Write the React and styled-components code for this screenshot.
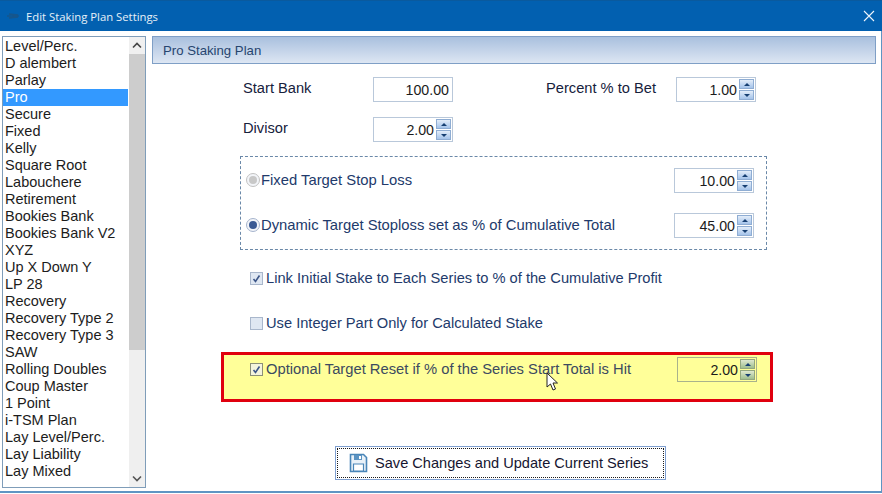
import React from 'react';
import styled, { createGlobalStyle } from 'styled-components';

const Global = createGlobalStyle`
  html, body { margin: 0; padding: 0; background: #fff; }
  body { font-family: "Liberation Sans", Arial, sans-serif; }
`;
const Win = styled.div`
  width: 882px; height: 494px; display: flex; flex-direction: column; overflow: hidden; background: #fff;
  box-sizing: border-box;
`;
const TitleBar = styled.div`
  height: 31px; flex: none; background: #0260b0; display: flex; align-items: center; padding: 0 7px 0 6px; color: #e6f0f8;
  font: 11.3px "Open Sans", "Liberation Sans", sans-serif; box-sizing: border-box; border-top: 1px solid #0a5a9e;
`;
const AppIcon = styled.svg` width: 15px; height: 10px; margin-right: 5px; flex: none; `;
const Title = styled.div` flex: 1; `;
const Body = styled.div`
  flex: none; height: 462px; display: flex; padding: 5px 5px 0 2px; box-sizing: border-box; gap: 6px;
  border-bottom: 2px solid #5f95c3; border-right: 1px solid #5f95c3;
`;
const ListBox = styled.div`
  width: 144px; height: 452px; flex: none; border: 1px solid #7f9db9; box-sizing: border-box; display: flex; background: #fff;
`;
const Items = styled.div` flex: 1; padding-top: 1px; overflow: hidden; `;
const Item = styled.div`
  height: 17px; line-height: 17px; font-size: 14.5px; padding-left: 2px; white-space: nowrap;
  color: ${p => (p.$sel ? '#fff' : '#1c1c1c')}; background: ${p => (p.$sel ? '#3399ff' : 'transparent')};
`;
const Scrollbar = styled.div`
  width: 16px; margin-left: 1px; flex: none; background: #efefef; display: flex; flex-direction: column;
`;
const ScrollBtn = styled.div` height: 17px; flex: none; display: flex; align-items: center; justify-content: center; background: #f0f0f0; `;
const Thumb = styled.div` height: 296px; flex: none; background: #cdcdcd; `;
const ScrollRest = styled.div` flex: 1; `;
const Panel = styled.div` flex: 1; display: flex; flex-direction: column; min-width: 0; `;
const Header = styled.div`
  height: 28px; flex: none; box-sizing: border-box; border: 1px solid #7f9fc6; background: linear-gradient(#a9c0de, #dde6f3);
  display: flex; align-items: center; padding-left: 10px; font: 13.2px "Liberation Sans", sans-serif; color: #26456f;
`;
const Form = styled.div` display: flex; flex-direction: column; padding: 13px 0 0 69px; flex: 1; `;
const Row = styled.div` display: flex; align-items: center; height: 25px; margin-top: ${p => p.$mt || 0}px; `;
const Label = styled.div`
  font-size: 14.67px; color: #16213c; width: ${p => p.$w}px; flex: none; padding-left: ${p => p.$pl}px; box-sizing: border-box; padding-bottom: 4px;
`;
const Group = styled.div`
  margin: 14px 0 0 19px; width: 527px; height: 94px; box-sizing: border-box; border: 1px dashed #6a88a8;
  padding: 11px 12px 0 5px; display: flex; flex-direction: column; gap: 20px;
`;
const OptRow = styled.div` display: flex; align-items: center; height: 25px; justify-content: space-between; `;
const OptLabel = styled.label`
  display: flex; align-items: center; gap: 1px; font-size: 14.8px; color: #223a6b; padding-bottom: 2px;
`;
const Radio = styled.span`
  width: 14px; height: 14px; border-radius: 50%; box-sizing: border-box; flex: none; display: flex; align-items: center; justify-content: center;
  border: 1px solid ${p => (p.$off ? '#c2c2c2' : '#a6b4cd')}; background: #f3f5f9;
  &::after { content: ''; width: 8px; height: 8px; border-radius: 50%; background: ${p => (p.$off ? '#c8c8c8' : '#3a5a94')}; }
`;
const CheckRow = styled.div`
  display: flex; align-items: center; margin: ${p => p.$mt}px 0 0 29px; height: 20px; gap: 3px; font-size: 14.67px; color: #223a6b;
`;
const Check = styled.span`
  width: 13px; height: 13px; flex: none; box-sizing: border-box; border: 1px solid ${p => (p.$hi ? '#8c9078' : '#a9b7cc')};
  background: ${p => (p.$hi ? '#f4f4dc' : '#dfe7f2')}; display: flex; align-items: center; justify-content: center; margin-top: 1px;
`;
const Highlight = styled.div`
  margin: 19px 0 0 0; width: 552px; height: 50px; box-sizing: border-box; border: 3px solid #e0000e; background: #ffff99;
  display: flex; align-items: flex-start; justify-content: space-between; padding: 2px 13px 0 26px; color: #3c4a60; font-size: 14.75px; position: relative;
`;
const HighText = styled.div` display: flex; align-items: center; gap: 3px; height: 25px; padding-bottom: 2px; box-sizing: border-box; `;
const Cursor = styled.svg` position: absolute; left: 322px; top: 17px; width: 13px; height: 20px; `;
const Footer = styled.div` display: flex; padding: 44px 0 0 114px; `;
const SaveButton = styled.button`
  width: 331px; height: 34px; box-sizing: border-box; border: 1px solid #7f9fd0; background: #fff; padding: 1px; display: block; font: inherit;
`;
const SaveInner = styled.span`
  display: flex; width: 100%; height: 100%; box-sizing: border-box; border: 1px dotted #1a1a1a; align-items: center; padding-left: 11px; gap: 7px;
  font: 14.6px "Liberation Sans", sans-serif; color: #151530;
`;
const Spin = styled.div`
  width: 80px; height: 25px; flex: none; box-sizing: border-box; border: 1px solid ${p => (p.$hi ? '#a9b28c' : '#b9c8da')};
  background: ${p => (p.$hi ? '#ffff99' : '#fff')}; display: flex; align-items: center; justify-content: flex-end; padding-right: 1px;
`;
const Value = styled.span` font-size: 14.2px; color: #1b1b1b; margin-right: 2px; padding-top: 1px; `;
const Btns = styled.div` width: 15px; height: 21px; display: flex; flex-direction: column; gap: 1px; flex: none; `;
const Btn = styled.div`
  flex: 1; display: flex; align-items: center; justify-content: center;
  background: ${p => (p.$hi ? 'linear-gradient(#dfe8cf,#9fbe8f)' : 'linear-gradient(#e3edf9,#a4c3ea)')}; border: 1px solid ${p => (p.$hi ? '#93a77f' : '#8fadd3')}; box-sizing: border-box;
`;
const Arrow = styled.span`
  width: 0; height: 0; border-left: 3px solid transparent; border-right: 3px solid transparent;
  ${p => (p.$down ? 'border-top: 3px solid #163f72;' : 'border-bottom: 3px solid #163f72;')}
`;

const SpinBox = ({ value, hi, plain }) => (
  <Spin $hi={hi}>
    <Value>{value}</Value>
    {!plain && (
      <Btns>
        <Btn $hi={hi}><Arrow /></Btn>
        <Btn $hi={hi}><Arrow $down /></Btn>
      </Btns>
    )}
  </Spin>
);
const Tick = () => (
  <svg width="9" height="9" viewBox="0 0 9 9"><path d="M1.5 5l2 2.5L7.5 1.5" fill="none" stroke="#3d5688" strokeWidth="1.6" /></svg>
);
const plans = ['Level/Perc.','D alembert','Parlay','Pro','Secure','Fixed','Kelly','Square Root','Labouchere','Retirement','Bookies Bank','Bookies Bank V2','XYZ','Up X Down Y','LP 28','Recovery','Recovery Type 2','Recovery Type 3','SAW','Rolling Doubles','Coup Master','1 Point','i-TSM Plan','Lay Level/Perc.','Lay Liability','Lay Mixed'];

export default function App() {
  return (
    <Win>
      <Global />
      <TitleBar>
        <AppIcon viewBox="0 0 15 10"><path d="M1 5h12M3 3l9 1M3 7l9-1" stroke="#16568c" strokeWidth="1.5" fill="none" /></AppIcon>
        <Title>Edit Staking Plan Settings</Title>
        <svg width="12" height="12" viewBox="0 0 12 12"><path d="M1 1l10 10M11 1L1 11" stroke="#eef5fb" strokeWidth="1.1" /></svg>
      </TitleBar>
      <Body>
        <ListBox>
          <Items>
            {plans.map(p => <Item key={p} $sel={p === 'Pro'}>{p}</Item>)}
          </Items>
          <Scrollbar>
            <ScrollBtn><svg width="10" height="7" viewBox="0 0 10 7"><path d="M1 5.5l4-4 4 4" fill="none" stroke="#444" strokeWidth="1.6" /></svg></ScrollBtn>
            <Thumb />
            <ScrollRest />
            <ScrollBtn><svg width="10" height="7" viewBox="0 0 10 7"><path d="M1 1.5l4 4 4-4" fill="none" stroke="#555" strokeWidth="1.6" /></svg></ScrollBtn>
          </Scrollbar>
        </ListBox>
        <Panel>
          <Header>Pro Staking Plan</Header>
          <Form>
            <Row>
              <Label $w={152} $pl={22}>Start Bank</Label>
              <SpinBox value="100.00" plain />
              <Label $w={223} $pl={93}>Percent % to Bet</Label>
              <SpinBox value="1.00" />
            </Row>
            <Row $mt={15}>
              <Label $w={152} $pl={22}>Divisor</Label>
              <SpinBox value="2.00" />
            </Row>
            <Group>
              <OptRow>
                <OptLabel><Radio $off />Fixed Target Stop Loss</OptLabel>
                <SpinBox value="10.00" />
              </OptRow>
              <OptRow>
                <OptLabel><Radio />Dynamic Target Stoploss set as % of Cumulative Total</OptLabel>
                <SpinBox value="45.00" />
              </OptRow>
            </Group>
            <CheckRow $mt={18}><Check><Tick /></Check>Link Initial Stake to Each Series to % of the Cumulative Profit</CheckRow>
            <CheckRow $mt={25}><Check />Use Integer Part Only for Calculated Stake</CheckRow>
            <Highlight>
              <HighText><Check $hi><Tick /></Check>Optional Target Reset if % of the Series Start Total is Hit</HighText>
              <SpinBox value="2.00" hi />
              <Cursor viewBox="0 0 13 20">
                <path d="M1 1v14l3.5-3 2.5 6 2.5-1-2.5-6h4.5z" fill="#fff" stroke="#222" strokeWidth="1" />
              </Cursor>
            </Highlight>
            <Footer>
              <SaveButton>
                <SaveInner>
                  <svg width="19" height="20" viewBox="0 0 19 20">
                    <path d="M1.5 1.5h13l3 3v14h-16z" fill="#e9f1f8" stroke="#4a86b8" strokeWidth="1.6" />
                    <path d="M5 2h8v5H5z" fill="#5b93c2" /><path d="M10 3h2v3h-2z" fill="#fff" />
                    <path d="M4.5 11h10v7h-10z" fill="#fff" stroke="#4a86b8" strokeWidth="1.2" />
                  </svg>
                  Save Changes and Update Current Series
                </SaveInner>
              </SaveButton>
            </Footer>
          </Form>
        </Panel>
      </Body>
    </Win>
  );
}
